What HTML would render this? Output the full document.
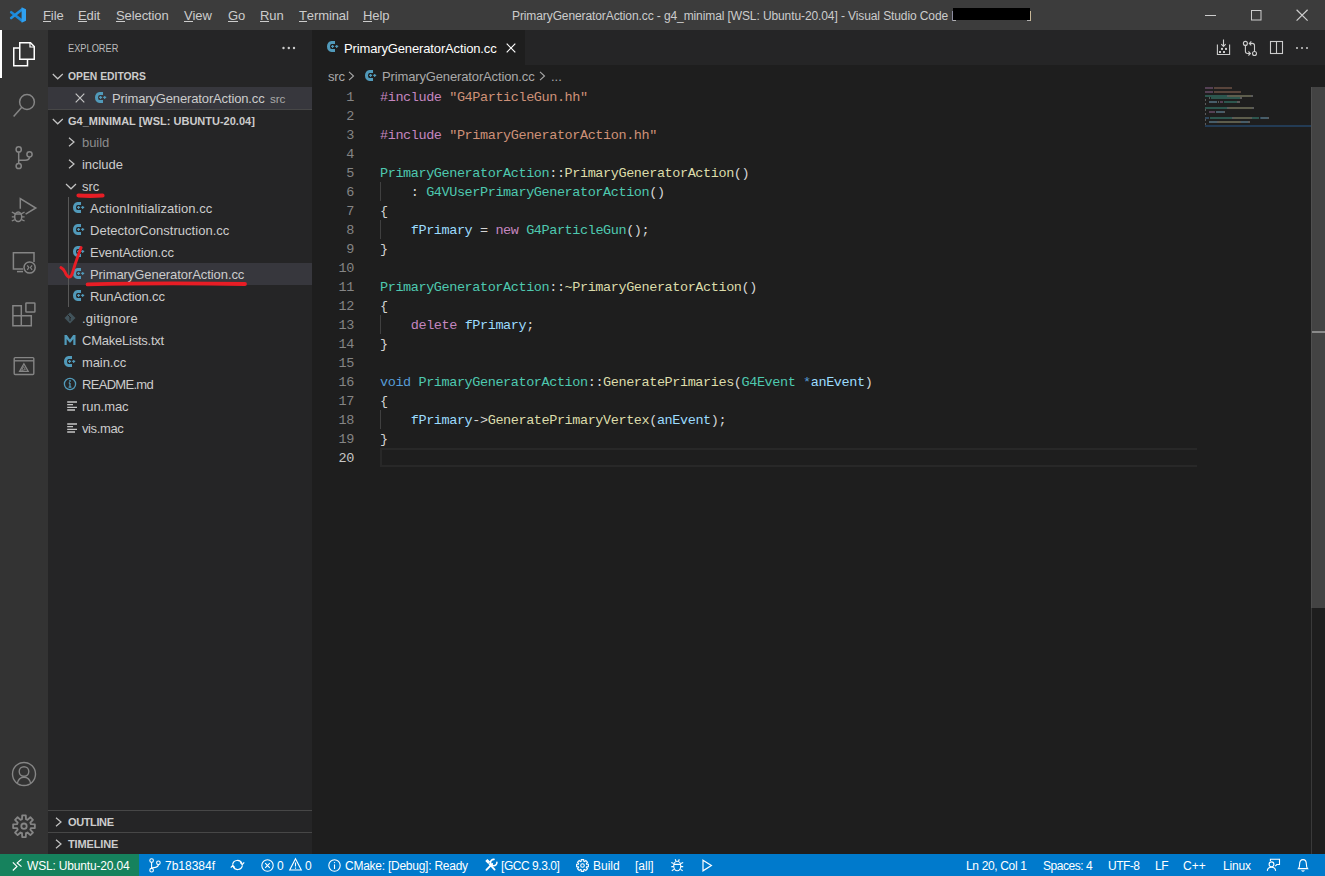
<!DOCTYPE html>
<html><head><meta charset="utf-8">
<style>
*{margin:0;padding:0;box-sizing:border-box}
html,body{width:1325px;height:876px;overflow:hidden;background:#1e1e1e;font-family:"Liberation Sans",sans-serif;color:#cccccc}
.abs{position:absolute}
#title{left:0;top:0;width:1325px;height:30px;background:#3c3c3c}
.menu{position:absolute;top:1px;height:30px;line-height:30px;font-size:13px;color:#cccccc;letter-spacing:-0.1px}
.menu u{text-decoration:none;border-bottom:1px solid #cccccc;display:inline-block;line-height:11px}
#wintitle{position:absolute;left:512px;top:1px;height:30px;line-height:30px;font-size:12px;color:#cccccc;letter-spacing:-0.1px;white-space:pre}
#act{left:0;top:30px;width:48px;height:824px;background:#333333}
#side{left:48px;top:30px;width:264px;height:824px;background:#252526}
#tabs{left:312px;top:30px;width:1013px;height:35px;background:#252526}
#tab{left:312px;top:30px;width:213px;height:35px;background:#1e1e1e}
#status{left:0;top:854px;width:1325px;height:22px;background:#007acc;color:#ffffff;font-size:12px}
#remote{left:0;top:854px;width:139px;height:22px;background:#16825d}
.st{position:absolute;top:855px;height:22px;line-height:22px;white-space:pre;color:#fff;font-size:12px}
.row{position:absolute;left:48px;width:264px;height:22px;line-height:22px;font-size:13px;white-space:pre;color:#cccccc}
.lbl{position:absolute;top:1px;letter-spacing:-0.05px}
.hdr{position:absolute;left:48px;width:264px;height:22px;line-height:22px;font-size:11px;font-weight:bold;color:#cccccc;white-space:pre}
.code{position:absolute;left:380px;font-family:"Liberation Mono",monospace;font-size:13.5px;letter-spacing:-0.41px;line-height:19px;white-space:pre;color:#d4d4d4}
.ln{position:absolute;left:312px;width:42px;text-align:right;font-family:"Liberation Mono",monospace;font-size:13.5px;letter-spacing:-0.41px;line-height:19px;color:#858585;white-space:pre}
.k{color:#c586c0}.s{color:#ce9178}.t{color:#4ec9b0}.f{color:#dcdcaa}.v{color:#9cdcfe}.b{color:#569cd6}
svg{position:absolute;overflow:visible}
</style></head><body>

<!-- TITLE BAR -->
<div id="title" class="abs"></div>
<svg style="left:10px;top:7px" width="16" height="16" viewBox="0 0 16 16">
  <path d="M1.2 5.2 L12 13.6" stroke="#1b87d8" stroke-width="2.6" stroke-linecap="round"/>
  <path d="M1.2 11 L12 2.4" stroke="#1f8fe0" stroke-width="2.6" stroke-linecap="round"/>
  <path d="M11.6 0.3 L16 2.2 L16 13.8 L11.6 15.7 Z" fill="#2fa0f0"/>
</svg>
<div class="menu" style="left:43px"><u>F</u>ile</div>
<div class="menu" style="left:78px"><u>E</u>dit</div>
<div class="menu" style="left:116px"><u>S</u>election</div>
<div class="menu" style="left:184px"><u>V</u>iew</div>
<div class="menu" style="left:228px"><u>G</u>o</div>
<div class="menu" style="left:260px"><u>R</u>un</div>
<div class="menu" style="left:299px"><u>T</u>erminal</div>
<div class="menu" style="left:363px"><u>H</u>elp</div>
<div id="wintitle">PrimaryGeneratorAction.cc - g4_minimal [WSL: Ubuntu-20.04] - Visual Studio Code</div>
<div class="abs" style="left:952px;top:11px;width:1px;height:10px;background:#8c8ca0"></div>
<div class="abs" style="left:953px;top:20px;width:3px;height:1px;background:#b0b0b0"></div>
<div class="abs" style="left:1030px;top:11px;width:1px;height:10px;background:#c8b898"></div>
<div class="abs" style="left:1027px;top:20px;width:3px;height:1px;background:#b0b0b0"></div>
<div class="abs" style="left:953px;top:8px;width:77px;height:12px;background:#000"></div>
<svg style="left:1205px;top:15px" width="12" height="2"><rect x="0" y="0" width="11" height="1" fill="#cccccc"/></svg>
<svg style="left:1251px;top:10px" width="12" height="12"><rect x="0.5" y="0.5" width="9.5" height="9.5" fill="none" stroke="#cccccc" stroke-width="1"/></svg>
<svg style="left:1296px;top:9px" width="13" height="13"><path d="M0.6 0.8 L11.6 11.6 M11.6 0.8 L0.6 11.6" stroke="#cccccc" stroke-width="1.2"/></svg>

<!-- ACTIVITY BAR -->
<div id="act" class="abs"></div>
<div class="abs" style="left:0;top:30px;width:2px;height:48px;background:#ffffff"></div>

<!-- activity icons -->
<svg style="left:0;top:30px" width="48" height="48" viewBox="0 0 48 48" fill="none" stroke="#ffffff" stroke-width="1.5">
  <path d="M19.2 18 H13.75 V35.8 H27.5 V30"/>
  <path d="M19.75 12.75 H30.5 L34.25 16.5 V29.25 H19.75 Z"/>
  <path d="M30 13 V17 H34" stroke-width="1.2"/>
</svg>
<svg style="left:0;top:78px" width="48" height="48" viewBox="0 0 48 48" fill="none" stroke="#858585" stroke-width="1.5">
  <circle cx="27" cy="24" r="7.4"/>
  <path d="M21.8 29.2 L13.6 38.6"/>
</svg>
<svg style="left:0;top:126px" width="48" height="48" viewBox="0 0 48 48" fill="none" stroke="#858585" stroke-width="1.5">
  <circle cx="18.7" cy="23.4" r="2.6"/>
  <circle cx="18.7" cy="40" r="2.6"/>
  <circle cx="29.5" cy="28.3" r="2.6"/>
  <path d="M18.7 26 V37.4"/>
  <path d="M29.5 31 C29.5 33.5 27.5 34.2 25 34.2 H18.7"/>
</svg>
<svg style="left:0;top:174px" width="48" height="48" viewBox="0 0 48 48" fill="none" stroke="#858585" stroke-width="1.5">
  <path d="M20.3 34.8 V24.5 L35.8 34 L25.6 40.2"/>
  <ellipse cx="18.2" cy="42.8" rx="3.5" ry="4.8"/>
  <path d="M14.8 40 H21.6 M11.8 38 L14.8 39.6 M24.6 38 L21.6 39.6 M11.8 42.8 H14.8 M21.6 42.8 H24.6 M11.8 47 L14.8 45.6 M24.6 47 L21.6 45.6" stroke-width="1.3"/>
</svg>
<svg style="left:0;top:222px" width="48" height="48" viewBox="0 0 48 48" fill="none" stroke="#858585" stroke-width="1.5">
  <path d="M23 47 H13.4 V30.8 H34 V40"/>
  <path d="M17 49.6 H23"/>
  <circle cx="29.6" cy="45.5" r="5.6"/>
  <path d="M27.3 43.4 L28.8 45.6 L27.3 47.8 M32.1 43.4 L30.4 45.6 L32.1 47.8" stroke-width="1.2"/>
</svg>
<svg style="left:0;top:270px" width="48" height="48" viewBox="0 0 48 48" fill="none" stroke="#858585" stroke-width="1.5">
  <path d="M12.9 35.8 H21.3 V45.8 H31.3 V55.8 H12.9 Z"/>
  <path d="M12.9 45.8 H21.3 V55.8"/>
  <rect x="25.9" y="33" width="9" height="9" rx="0.6"/>
</svg>
<svg style="left:0;top:318px" width="48" height="48" viewBox="0 0 48 48" fill="none" stroke="#858585" stroke-width="1.4">
  <rect x="14.2" y="39.6" width="19.6" height="16.9" rx="1"/>
  <path d="M14.2 42.8 H33.8"/>
  <path d="M23.9 45.8 L28.2 53.4 H19.6 Z" stroke-width="1.3"/>
  <path d="M23.4 48.5 L21.6 52.6 L25.4 51.4 Z" stroke-width="0.9"/>
</svg>
<svg style="left:0;top:750px" width="48" height="48" viewBox="0 0 48 48" fill="none" stroke="#858585" stroke-width="1.4">
  <circle cx="24" cy="24" r="11.5"/>
  <circle cx="24" cy="21.5" r="4.8"/>
  <path d="M17.2 33.6 C18 29.8 20.6 27.2 24 27.2 C27.4 27.2 30 29.8 30.8 33.6"/>
</svg>
<svg style="left:0;top:802px" width="48" height="48" viewBox="0 0 48 48" fill="none" stroke="#858585" stroke-width="1.8" stroke-linejoin="round">
  <path d="M22.01 17.28 L22.19 13.35 L25.81 13.35 L25.99 17.28 L27.49 17.90 L30.39 15.25 L32.95 17.81 L30.30 20.71 L30.92 22.21 L34.85 22.39 L34.85 26.01 L30.92 26.19 L30.30 27.69 L32.95 30.59 L30.39 33.15 L27.49 30.50 L25.99 31.12 L25.81 35.05 L22.19 35.05 L22.01 31.12 L20.51 30.50 L17.61 33.15 L15.05 30.59 L17.70 27.69 L17.08 26.19 L13.15 26.01 L13.15 22.39 L17.08 22.21 L17.70 20.71 L15.05 17.81 L17.61 15.25 L20.51 17.90 Z"/>
  <circle cx="24" cy="24.2" r="2.7"/>
</svg>

<!-- SIDEBAR -->
<div id="side" class="abs"></div>
<div class="abs" style="left:68px;top:31px;height:35px;line-height:35px;font-size:11px;color:#bbbbbb;white-space:pre"><span style="display:inline-block;transform:scaleX(0.84);transform-origin:left">EXPLORER</span></div>
<svg style="left:282px;top:46px" width="14" height="4"><circle cx="1.5" cy="2" r="1.2" fill="#cccccc"/><circle cx="6.8" cy="2" r="1.2" fill="#cccccc"/><circle cx="12" cy="2" r="1.2" fill="#cccccc"/></svg>
<!-- open editors header -->
<svg style="left:52px;top:72px" width="12" height="8" viewBox="0 0 12 8"><path d="M0.8 2 L5.7 6.8 L10.8 2" fill="none" stroke="#c5c5c5" stroke-width="1.2"/></svg>
<div class="hdr" style="left:68px;top:65px;width:auto"><span style="display:inline-block;transform:scaleX(0.94);transform-origin:left">OPEN EDITORS</span></div>
<div class="abs" style="left:48px;top:87px;width:264px;height:22px;background:#37373d"></div>
<svg style="left:75px;top:93px" width="10" height="10" viewBox="0 0 10 10"><path d="M0.7 0.7 L9.3 9.3 M9.3 0.7 L0.7 9.3" stroke="#c5c5c5" stroke-width="1.2"/></svg>
<svg style="left:95px;top:92px" width="13" height="12" viewBox="0 0 13 12"><path d="M8 1.5 H4.5 A3 4 0 0 0 4.5 9.5 H8" fill="none" stroke="#519aba" stroke-width="3"/><path d="M4.1 5.4 H7.1 M5.6 3.9 V6.9 M8.2 5.4 H11.2 M9.7 3.9 V6.9" stroke="#519aba" stroke-width="1.1"/></svg>
<div class="row" style="top:87px"><span class="lbl" style="left:64px;letter-spacing:-0.14px">PrimaryGeneratorAction.cc</span><span class="lbl" style="left:222px;font-size:11.7px;color:#a9a9a9;letter-spacing:-0.1px">src</span></div>
<!-- project header -->
<div class="abs" style="left:48px;top:109px;width:264px;height:1px;background:#474747"></div>
<svg style="left:52px;top:117px" width="12" height="8" viewBox="0 0 12 8"><path d="M0.8 2 L5.7 6.8 L10.8 2" fill="none" stroke="#c5c5c5" stroke-width="1.2"/></svg>
<div class="hdr" style="left:68px;top:110px;width:auto">G4_MINIMAL [WSL: UBUNTU-20.04]</div>
<!-- tree -->
<svg style="left:67.5px;top:137px" width="8" height="10" viewBox="0 0 8 10"><path d="M1 0.8 L6 5 L1 9.2" fill="none" stroke="#c5c5c5" stroke-width="1.2"/></svg>
<div class="row" style="top:131px"><span class="lbl" style="left:34px;color:#8c8c8c">build</span></div>
<svg style="left:67.5px;top:159px" width="8" height="10" viewBox="0 0 8 10"><path d="M1 0.8 L6 5 L1 9.2" fill="none" stroke="#c5c5c5" stroke-width="1.2"/></svg>
<div class="row" style="top:153px"><span class="lbl" style="left:34px">include</span></div>
<svg style="left:65px;top:182px" width="12" height="8" viewBox="0 0 12 8"><path d="M1 2 L6 6.8 L11 2" fill="none" stroke="#c5c5c5" stroke-width="1.2"/></svg>
<div class="row" style="top:175px"><span class="lbl" style="left:34px">src</span></div>
<div class="abs" style="left:68px;top:197px;width:1px;height:110px;background:#585858"></div>
<svg style="left:73px;top:202px" width="13" height="12" viewBox="0 0 13 12"><path d="M8 1.5 H4.5 A3 4 0 0 0 4.5 9.5 H8" fill="none" stroke="#519aba" stroke-width="3"/><path d="M4.1 5.4 H7.1 M5.6 3.9 V6.9 M8.2 5.4 H11.2 M9.7 3.9 V6.9" stroke="#519aba" stroke-width="1.1"/></svg><div class="row" style="top:197px"><span class="lbl" style="left:42px;letter-spacing:0.077px">ActionInitialization.cc</span></div>
<svg style="left:73px;top:224px" width="13" height="12" viewBox="0 0 13 12"><path d="M8 1.5 H4.5 A3 4 0 0 0 4.5 9.5 H8" fill="none" stroke="#519aba" stroke-width="3"/><path d="M4.1 5.4 H7.1 M5.6 3.9 V6.9 M8.2 5.4 H11.2 M9.7 3.9 V6.9" stroke="#519aba" stroke-width="1.1"/></svg><div class="row" style="top:219px"><span class="lbl" style="left:42px;letter-spacing:0.027px">DetectorConstruction.cc</span></div>
<svg style="left:73px;top:246px" width="13" height="12" viewBox="0 0 13 12"><path d="M8 1.5 H4.5 A3 4 0 0 0 4.5 9.5 H8" fill="none" stroke="#519aba" stroke-width="3"/><path d="M4.1 5.4 H7.1 M5.6 3.9 V6.9 M8.2 5.4 H11.2 M9.7 3.9 V6.9" stroke="#519aba" stroke-width="1.1"/></svg><div class="row" style="top:241px"><span class="lbl" style="left:42px;letter-spacing:-0.162px">EventAction.cc</span></div>
<div class="abs" style="left:48px;top:263px;width:264px;height:22px;background:#37373d"></div>
<div class="abs" style="left:68px;top:263px;width:1px;height:22px;background:#585858"></div>
<svg style="left:73px;top:268px" width="13" height="12" viewBox="0 0 13 12"><path d="M8 1.5 H4.5 A3 4 0 0 0 4.5 9.5 H8" fill="none" stroke="#519aba" stroke-width="3"/><path d="M4.1 5.4 H7.1 M5.6 3.9 V6.9 M8.2 5.4 H11.2 M9.7 3.9 V6.9" stroke="#519aba" stroke-width="1.1"/></svg><div class="row" style="top:263px"><span class="lbl" style="left:42px;letter-spacing:-0.071px">PrimaryGeneratorAction.cc</span></div>
<svg style="left:73px;top:290px" width="13" height="12" viewBox="0 0 13 12"><path d="M8 1.5 H4.5 A3 4 0 0 0 4.5 9.5 H8" fill="none" stroke="#519aba" stroke-width="3"/><path d="M4.1 5.4 H7.1 M5.6 3.9 V6.9 M8.2 5.4 H11.2 M9.7 3.9 V6.9" stroke="#519aba" stroke-width="1.1"/></svg><div class="row" style="top:285px"><span class="lbl" style="left:42px;letter-spacing:-0.155px">RunAction.cc</span></div>
<svg style="left:64px;top:312px" width="12" height="12" viewBox="0 0 12 12"><path d="M6 0.5 L11.5 6 L6 11.5 L0.5 6 Z" fill="#41535b"/><path d="M4 3 L7 6 M6 5 V9" stroke="#252526" stroke-width="1"/></svg>
<div class="row" style="top:307px"><span class="lbl" style="left:34px;letter-spacing:0.244px">.gitignore</span></div>
<svg style="left:64px;top:334px" width="12" height="12" viewBox="0 0 12 12"><path d="M0.5 11 V1 H2.8 L6 5.6 L9.2 1 H11.5 V11 H9.3 V5 L6.6 8.6 H5.4 L2.7 5 V11 Z" fill="#519aba"/></svg>
<div class="row" style="top:329px"><span class="lbl" style="left:34px;letter-spacing:-0.238px">CMakeLists.txt</span></div>
<svg style="left:64px;top:356px" width="13" height="12" viewBox="0 0 13 12"><path d="M8 1.5 H4.5 A3 4 0 0 0 4.5 9.5 H8" fill="none" stroke="#519aba" stroke-width="3"/><path d="M4.1 5.4 H7.1 M5.6 3.9 V6.9 M8.2 5.4 H11.2 M9.7 3.9 V6.9" stroke="#519aba" stroke-width="1.1"/></svg><div class="row" style="top:351px"><span class="lbl" style="left:34px;letter-spacing:-0.100px">main.cc</span></div>
<svg style="left:63px;top:377px" width="14" height="14" viewBox="0 0 14 14"><circle cx="7" cy="7" r="5.6" fill="none" stroke="#519aba" stroke-width="1.3"/><path d="M7 6 V10.2 M5.6 10.2 H8.4 M5.8 6 H7" stroke="#519aba" stroke-width="1.3"/><circle cx="7" cy="3.9" r="0.9" fill="#519aba"/></svg>
<div class="row" style="top:373px"><span class="lbl" style="left:34px;letter-spacing:-0.700px">README.md</span></div>
<svg style="left:67px;top:400px" width="11" height="12" viewBox="0 0 11 12"><path d="M0.2 2 H10 M0.2 4.6 H6 M0.2 7.4 H10 M0.2 10 H8" stroke="#c5c5c5" stroke-width="1.3"/></svg>
<div class="row" style="top:395px"><span class="lbl" style="left:34px;letter-spacing:-0.067px">run.mac</span></div>
<svg style="left:67px;top:422px" width="11" height="12" viewBox="0 0 11 12"><path d="M0.2 2 H10 M0.2 4.6 H6 M0.2 7.4 H10 M0.2 10 H8" stroke="#c5c5c5" stroke-width="1.3"/></svg>
<div class="row" style="top:417px"><span class="lbl" style="left:34px;letter-spacing:-0.383px">vis.mac</span></div>
<!-- annotations -->
<svg style="left:0;top:0" width="312" height="320" fill="none" stroke="#e81d25" stroke-linecap="round">
  <path d="M78.5 195.5 Q90 196.2 102.5 195.5" stroke-width="4.2"/>
  <path d="M61 267.6 Q63.6 268.8 65 272 Q66.6 276.2 68.6 277 Q71 277.4 72.2 273.8 Q75.5 262 81.1 247.6" stroke-width="2.9"/>
  <path d="M87.6 284.4 Q160 282.6 245 284" stroke-width="3.8"/>
</svg>
<!-- outline/timeline -->
<div class="abs" style="left:48px;top:810px;width:264px;height:1px;background:#474747"></div>
<svg style="left:55px;top:817px" width="8" height="10" viewBox="0 0 8 10"><path d="M1 0.8 L6 5 L1 9.2" fill="none" stroke="#c5c5c5" stroke-width="1.2"/></svg>
<div class="hdr" style="left:68px;top:811px;width:auto;letter-spacing:-0.38px">OUTLINE</div>
<div class="abs" style="left:48px;top:832px;width:264px;height:1px;background:#474747"></div>
<svg style="left:55px;top:839px" width="8" height="10" viewBox="0 0 8 10"><path d="M1 0.8 L6 5 L1 9.2" fill="none" stroke="#c5c5c5" stroke-width="1.2"/></svg>
<div class="hdr" style="left:68px;top:833px;width:auto;letter-spacing:-0.13px">TIMELINE</div>


<!-- EDITOR TABS -->
<div id="tabs" class="abs"></div>
<div id="tab" class="abs"></div>
<svg style="left:327px;top:41px" width="13" height="12" viewBox="0 0 13 12"><path d="M8 1.5 H4.5 A3 4 0 0 0 4.5 9.5 H8" fill="none" stroke="#519aba" stroke-width="3"/><path d="M4.1 5.4 H7.1 M5.6 3.9 V6.9 M8.2 5.4 H11.2 M9.7 3.9 V6.9" stroke="#519aba" stroke-width="1.1"/></svg>
<div class="abs" style="left:344px;top:31px;height:35px;line-height:35px;font-size:13px;color:#ffffff;white-space:pre;letter-spacing:-0.14px">PrimaryGeneratorAction.cc</div>
<svg style="left:506px;top:43px" width="10" height="10" viewBox="0 0 10 10"><path d="M0.7 0.7 L9.3 9.3 M9.3 0.7 L0.7 9.3" stroke="#ffffff" stroke-width="1.2"/></svg>
<!-- editor actions -->
<svg style="left:1210px;top:32px" width="100" height="32" viewBox="0 0 100 32" fill="none" stroke="#cccccc" stroke-width="1.1">
  <path d="M7.4 12.6 V22.5 H19.6 V12.6"/>
  <path d="M13.5 7.6 V14.4 M11.3 12.2 L13.5 14.4 L15.7 12.2"/>
  <rect x="11" y="15.9" width="2" height="2" fill="#cccccc" stroke="none"/>
  <rect x="15" y="15.9" width="2" height="2" fill="#cccccc" stroke="none"/>
  <rect x="9" y="19" width="2" height="2" fill="#cccccc" stroke="none"/>
  <rect x="13" y="19" width="2" height="2" fill="#cccccc" stroke="none"/>
  <circle cx="35.4" cy="11.4" r="2"/>
  <circle cx="44.5" cy="21.5" r="2"/>
  <path d="M35.4 13.4 V19.3 Q35.4 21.5 37.6 21.5 H40.4 M38.4 19.5 L40.4 21.5 L38.4 23.5"/>
  <path d="M44.5 19.5 V13.6 Q44.5 11.4 42.3 11.4 H39.3 M41.3 9.4 L39.3 11.4 L41.3 13.4"/>
  <rect x="60.5" y="9.5" width="12" height="12"/>
  <path d="M66.5 9.5 V21.5"/>
  <circle cx="87" cy="16" r="1" fill="#cccccc" stroke="none"/>
  <circle cx="92" cy="16" r="1" fill="#cccccc" stroke="none"/>
  <circle cx="97" cy="16" r="1" fill="#cccccc" stroke="none"/>
</svg>
<!-- breadcrumbs -->
<div class="abs" style="left:328px;top:66px;height:22px;line-height:22px;font-size:13px;color:#a9a9a9;white-space:pre;letter-spacing:-0.14px">src</div>
<svg style="left:348px;top:71px" width="8" height="10" viewBox="0 0 8 10"><path d="M1 0.8 L5.5 5 L1 9.2" fill="none" stroke="#a9a9a9" stroke-width="1.1"/></svg>
<svg style="left:365px;top:70px" width="13" height="12" viewBox="0 0 13 12"><path d="M8 1.5 H4.5 A3 4 0 0 0 4.5 9.5 H8" fill="none" stroke="#519aba" stroke-width="3"/><path d="M4.1 5.4 H7.1 M5.6 3.9 V6.9 M8.2 5.4 H11.2 M9.7 3.9 V6.9" stroke="#519aba" stroke-width="1.1"/></svg>
<div class="abs" style="left:382px;top:66px;height:22px;line-height:22px;font-size:13px;color:#a9a9a9;white-space:pre;letter-spacing:-0.14px">PrimaryGeneratorAction.cc</div>
<svg style="left:539px;top:71px" width="8" height="10" viewBox="0 0 8 10"><path d="M1 0.8 L5.5 5 L1 9.2" fill="none" stroke="#a9a9a9" stroke-width="1.1"/></svg>
<div class="abs" style="left:551px;top:66px;height:22px;line-height:22px;font-size:13px;color:#a9a9a9;white-space:pre">...</div>
<!-- current line -->
<div class="abs" style="left:380px;top:448px;width:817px;height:19px;border:2px solid #282828;border-right:none"></div>
<!-- indent guides -->
<div class="abs" style="left:380px;top:182px;width:1px;height:19px;background:#404040"></div>
<div class="abs" style="left:380px;top:220px;width:1px;height:19px;background:#404040"></div>
<div class="abs" style="left:380px;top:315px;width:1px;height:19px;background:#404040"></div>
<div class="abs" style="left:380px;top:410px;width:1px;height:19px;background:#404040"></div>
<!-- line numbers -->
<div class="ln" style="top:88px">1
2
3
4
5
6
7
8
9
10
11
12
13
14
15
16
17
18
19
<span style="color:#c6c6c6">20</span></div>
<div class="code" style="top:88px"><span class="k">#include</span> <span class="s">"G4ParticleGun.hh"</span>

<span class="k">#include</span> <span class="s">"PrimaryGeneratorAction.hh"</span>

<span class="t">PrimaryGeneratorAction</span>::<span class="f">PrimaryGeneratorAction</span>()
    : <span class="t">G4VUserPrimaryGeneratorAction</span>()
{
    <span class="v">fPrimary</span> = <span class="k">new</span> <span class="t">G4ParticleGun</span>();
}

<span class="t">PrimaryGeneratorAction</span>::<span class="f">~PrimaryGeneratorAction</span>()
{
    <span class="k">delete</span> <span class="v">fPrimary</span>;
}

<span class="b">void</span> <span class="t">PrimaryGeneratorAction</span>::<span class="f">GeneratePrimaries</span>(<span class="t">G4Event</span> <span class="b">*</span><span class="v">anEvent</span>)
{
    <span class="v">fPrimary</span>-&gt;<span class="f">GeneratePrimaryVertex</span>(<span class="v">anEvent</span>);
}
</div>
<!-- minimap -->
<svg style="left:1205px;top:87px" width="106" height="42" viewBox="0 0 106 42">
<rect x="0" y="38" width="106" height="2" fill="#264f78" opacity="0.6"/>
<rect x="0" y="0.2" width="8" height="1.6" fill="#c586c0" opacity="0.42"/>
<rect x="9" y="0.2" width="18" height="1.6" fill="#ce9178" opacity="0.42"/>
<rect x="0" y="4.2" width="8" height="1.6" fill="#c586c0" opacity="0.42"/>
<rect x="9" y="4.2" width="27" height="1.6" fill="#ce9178" opacity="0.42"/>
<rect x="0" y="8.2" width="22" height="1.6" fill="#4ec9b0" opacity="0.42"/>
<rect x="22" y="8.2" width="2" height="1.6" fill="#d4d4d4" opacity="0.42"/>
<rect x="24" y="8.2" width="22" height="1.6" fill="#dcdcaa" opacity="0.42"/>
<rect x="46" y="8.2" width="2" height="1.6" fill="#d4d4d4" opacity="0.42"/>
<rect x="4" y="10.2" width="1" height="1.6" fill="#d4d4d4" opacity="0.42"/>
<rect x="6" y="10.2" width="29" height="1.6" fill="#4ec9b0" opacity="0.42"/>
<rect x="35" y="10.2" width="2" height="1.6" fill="#d4d4d4" opacity="0.42"/>
<rect x="0" y="12.2" width="1" height="1.6" fill="#d4d4d4" opacity="0.42"/>
<rect x="4" y="14.2" width="8" height="1.6" fill="#9cdcfe" opacity="0.42"/>
<rect x="13" y="14.2" width="1" height="1.6" fill="#d4d4d4" opacity="0.42"/>
<rect x="15" y="14.2" width="3" height="1.6" fill="#c586c0" opacity="0.42"/>
<rect x="19" y="14.2" width="13" height="1.6" fill="#4ec9b0" opacity="0.42"/>
<rect x="32" y="14.2" width="3" height="1.6" fill="#d4d4d4" opacity="0.42"/>
<rect x="0" y="16.2" width="1" height="1.6" fill="#d4d4d4" opacity="0.42"/>
<rect x="0" y="20.2" width="22" height="1.6" fill="#4ec9b0" opacity="0.42"/>
<rect x="22" y="20.2" width="2" height="1.6" fill="#d4d4d4" opacity="0.42"/>
<rect x="24" y="20.2" width="23" height="1.6" fill="#dcdcaa" opacity="0.42"/>
<rect x="47" y="20.2" width="2" height="1.6" fill="#d4d4d4" opacity="0.42"/>
<rect x="0" y="22.2" width="1" height="1.6" fill="#d4d4d4" opacity="0.42"/>
<rect x="4" y="24.2" width="6" height="1.6" fill="#c586c0" opacity="0.42"/>
<rect x="11" y="24.2" width="8" height="1.6" fill="#9cdcfe" opacity="0.42"/>
<rect x="19" y="24.2" width="1" height="1.6" fill="#d4d4d4" opacity="0.42"/>
<rect x="0" y="26.2" width="1" height="1.6" fill="#d4d4d4" opacity="0.42"/>
<rect x="0" y="30.2" width="4" height="1.6" fill="#569cd6" opacity="0.42"/>
<rect x="5" y="30.2" width="22" height="1.6" fill="#4ec9b0" opacity="0.42"/>
<rect x="27" y="30.2" width="2" height="1.6" fill="#d4d4d4" opacity="0.42"/>
<rect x="29" y="30.2" width="17" height="1.6" fill="#dcdcaa" opacity="0.42"/>
<rect x="46" y="30.2" width="1" height="1.6" fill="#d4d4d4" opacity="0.42"/>
<rect x="47" y="30.2" width="7" height="1.6" fill="#4ec9b0" opacity="0.42"/>
<rect x="55" y="30.2" width="1" height="1.6" fill="#569cd6" opacity="0.42"/>
<rect x="56" y="30.2" width="7" height="1.6" fill="#9cdcfe" opacity="0.42"/>
<rect x="63" y="30.2" width="1" height="1.6" fill="#d4d4d4" opacity="0.42"/>
<rect x="0" y="32.2" width="1" height="1.6" fill="#d4d4d4" opacity="0.42"/>
<rect x="4" y="34.2" width="8" height="1.6" fill="#9cdcfe" opacity="0.42"/>
<rect x="12" y="34.2" width="2" height="1.6" fill="#d4d4d4" opacity="0.42"/>
<rect x="14" y="34.2" width="21" height="1.6" fill="#dcdcaa" opacity="0.42"/>
<rect x="35" y="34.2" width="1" height="1.6" fill="#d4d4d4" opacity="0.42"/>
<rect x="36" y="34.2" width="7" height="1.6" fill="#9cdcfe" opacity="0.42"/>
<rect x="43" y="34.2" width="2" height="1.6" fill="#d4d4d4" opacity="0.42"/>
<rect x="0" y="36.2" width="1" height="1.6" fill="#d4d4d4" opacity="0.42"/>
</svg>
<!-- scrollbar -->
<div class="abs" style="left:1311px;top:87px;width:1px;height:767px;background:#3a3a3a"></div>
<div class="abs" style="left:1311px;top:87px;width:14px;height:521px;background:#434343;border-left:1px solid #4f4f4f"></div>
<div class="abs" style="left:1312px;top:331px;width:13px;height:2px;background:#8a8a8a"></div>


<!-- STATUS BAR -->
<div id="status" class="abs"></div>
<div id="remote" class="abs"></div>

<svg style="left:12px;top:858px" width="12" height="14" viewBox="0 0 12 14" fill="none" stroke="#ffffff" stroke-width="1.2"><path d="M0.85 4.3 L4.96 8.4 L0.85 12.5"/><path d="M9.5 1.2 L5.2 4.9 L9.5 8.6"/></svg>
<div class="st" style="left:27px;letter-spacing:-0.17px">WSL: Ubuntu-20.04</div>
<svg style="left:149px;top:858px" width="12" height="15" viewBox="0 0 12 15" fill="none" stroke="#ffffff" stroke-width="1.1"><circle cx="2.6" cy="2.6" r="1.8"/><circle cx="2.6" cy="12.2" r="1.8"/><circle cx="9.4" cy="4.8" r="1.8"/><path d="M2.6 4.4 V10.4 M9.4 6.6 Q9.4 9 6.4 9.4 L2.6 10"/></svg>
<div class="st" style="left:165px">7b18384f</div>
<svg style="left:230px;top:858px" width="15" height="14" viewBox="0 0 15 14" fill="none" stroke="#ffffff" stroke-width="1.2"><path d="M2.6 6.6 A4.9 4.9 0 0 1 12 5.6 M12.4 7.4 A4.9 4.9 0 0 1 3 8.4"/><path d="M10.2 4.4 L12.2 6.6 L14.2 4.4 M0.8 9.6 L2.8 7.4 L4.8 9.6"/></svg>
<svg style="left:261px;top:859px" width="13" height="13" viewBox="0 0 13 13" fill="none" stroke="#ffffff" stroke-width="1.1"><circle cx="6.5" cy="6.5" r="5.7"/><path d="M4.2 4.2 L8.8 8.8 M8.8 4.2 L4.2 8.8"/></svg>
<div class="st" style="left:277px">0</div>
<svg style="left:289px;top:858px" width="13" height="13" viewBox="0 0 13 13" fill="none" stroke="#ffffff" stroke-width="1.1"><path d="M6.5 0.8 L12.3 12 H0.7 Z"/><path d="M6.5 4.4 V8.4 M6.5 9.6 V10.8"/></svg>
<div class="st" style="left:305px">0</div>
<svg style="left:328px;top:859px" width="13" height="13" viewBox="0 0 13 13" fill="none" stroke="#ffffff" stroke-width="1.1"><circle cx="6.5" cy="6.5" r="5.7"/><path d="M6.5 5.4 V10"/><circle cx="6.5" cy="3.6" r="0.7" fill="#fff" stroke="none"/></svg>
<div class="st" style="left:345px;letter-spacing:-0.25px">CMake: [Debug]: Ready</div>
<svg style="left:484px;top:858px" width="15" height="14" viewBox="0 0 15 14" fill="none" stroke="#ffffff" stroke-linecap="round"><path d="M2.4 11.8 L8.2 6" stroke-width="1.8"/><path d="M10 1.4 A3.2 3.2 0 1 0 12.9 4.4" stroke-width="1.6"/><path d="M5.6 6.2 L10.6 11.6" stroke-width="1.8"/><path d="M2.2 3 L3.4 1.8 L5.4 3.8 L4.2 5 Z" stroke-width="1.3" fill="#ffffff"/></svg>
<div class="st" style="left:501px;letter-spacing:-0.45px">[GCC 9.3.0]</div>
<svg style="left:576px;top:859px" width="13" height="13" viewBox="0 0 13 13" fill="none" stroke="#ffffff" stroke-width="1.1"><path d="M5.15 2.42 L5.31 0.62 L7.69 0.62 L7.85 2.42 L8.43 2.66 L9.82 1.50 L11.50 3.18 L10.34 4.57 L10.58 5.15 L12.38 5.31 L12.38 7.69 L10.58 7.85 L10.34 8.43 L11.50 9.82 L9.82 11.50 L8.43 10.34 L7.85 10.58 L7.69 12.38 L5.31 12.38 L5.15 10.58 L4.57 10.34 L3.18 11.50 L1.50 9.82 L2.66 8.43 L2.42 7.85 L0.62 7.69 L0.62 5.31 L2.42 5.15 L2.66 4.57 L1.50 3.18 L3.18 1.50 L4.57 2.66 Z"/><circle cx="6.5" cy="6.5" r="1.8"/></svg>
<div class="st" style="left:593px">Build</div>
<div class="st" style="left:635px">[all]</div>
<svg style="left:670px;top:858px" width="15" height="14" viewBox="0 0 15 14" fill="none" stroke="#ffffff" stroke-width="1.1"><ellipse cx="7.25" cy="8" rx="3.5" ry="4.7"/><path d="M3.8 6.4 H10.7 M1.3 4.6 L3.7 5.6 M13.2 4.6 L10.8 5.6 M1.3 8.6 H3.7 M10.8 8.6 H13.2 M1.8 12.8 L4 11.4 M12.7 12.8 L10.5 11.4 M5.2 1.2 L6 3.2 M9.3 1.2 L8.5 3.2"/></svg>
<svg style="left:702px;top:859px" width="11" height="13" viewBox="0 0 11 13" fill="none" stroke="#ffffff" stroke-width="1.2"><path d="M1 1.2 L9.4 6.5 L1 11.8 Z"/></svg>
<div class="st" style="left:966px;letter-spacing:-0.35px">Ln 20, Col 1</div>
<div class="st" style="left:1043px;letter-spacing:-0.45px">Spaces: 4</div>
<div class="st" style="left:1108px;letter-spacing:-0.5px">UTF-8</div>
<div class="st" style="left:1155px;letter-spacing:-0.5px">LF</div>
<div class="st" style="left:1183px">C++</div>
<div class="st" style="left:1223px;letter-spacing:-0.2px">Linux</div>
<svg style="left:1266px;top:858px" width="14" height="14" viewBox="0 0 14 14" fill="none" stroke="#ffffff" stroke-width="1.1"><circle cx="5.5" cy="6.3" r="2.4"/><path d="M1.3 12.9 Q1.6 9.2 5.5 9.2 Q9.4 9.2 9.6 12.9"/><path d="M4.4 3 V1.3 H13.5 V6.5 H10.8 L9.2 8.1"/></svg>
<svg style="left:1296px;top:858px" width="14" height="14" viewBox="0 0 14 14" fill="none" stroke="#ffffff" stroke-width="1.1"><path d="M2.4 10.6 Q3.6 9 3.6 6.4 Q3.6 1.6 7 1.6 Q10.4 1.6 10.4 6.4 Q10.4 9 11.6 10.6 Z"/><path d="M5.6 12.4 Q7 13.8 8.4 12.4"/></svg>


</body></html>
